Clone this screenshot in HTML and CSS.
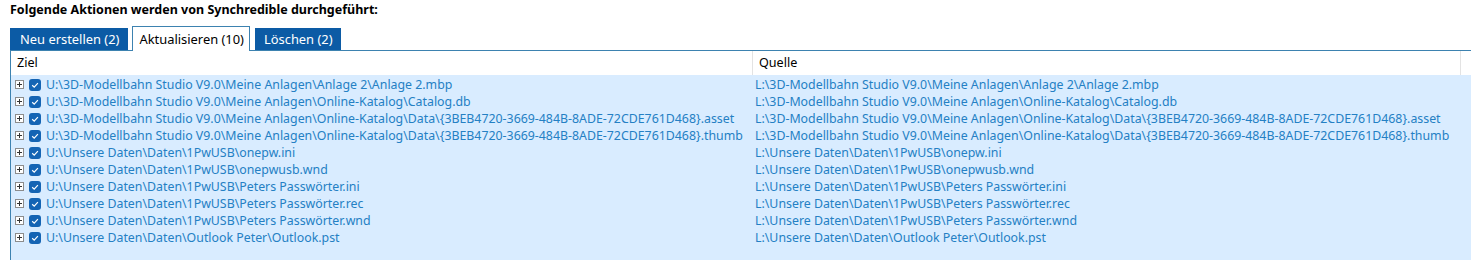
FILE: index.html
```html
<!DOCTYPE html>
<html lang="de">
<head>
  <meta charset="UTF-8">
  <title>Synchredible - Vorschau</title>
  <link rel="stylesheet" href="styles.css">
</head>
<body>
  <h1 class="title">Folgende Aktionen werden von Synchredible durchgeführt:</h1>

  <div class="tabs">
    <div class="tab">Neu erstellen (2)</div>
    <div class="tab active">Aktualisieren (10)</div>
    <div class="tab">Löschen (2)</div>
  </div>

  <div class="panel">
    <div class="head">
      <div class="col col-ziel">Ziel</div>
      <div class="col col-quelle">Quelle</div>
      <div class="col col-rest"></div>
    </div>
    <div class="list" id="list"></div>
  </div>

  <script>
    const pfade = [
      '3D-Modellbahn Studio V9.0\\Meine Anlagen\\Anlage 2\\Anlage 2.mbp',
      '3D-Modellbahn Studio V9.0\\Meine Anlagen\\Online-Katalog\\Catalog.db',
      '3D-Modellbahn Studio V9.0\\Meine Anlagen\\Online-Katalog\\Data\\{3BEB4720-3669-484B-8ADE-72CDE761D468}.asset',
      '3D-Modellbahn Studio V9.0\\Meine Anlagen\\Online-Katalog\\Data\\{3BEB4720-3669-484B-8ADE-72CDE761D468}.thumb',
      'Unsere Daten\\Daten\\1PwUSB\\onepw.ini',
      'Unsere Daten\\Daten\\1PwUSB\\onepwusb.wnd',
      'Unsere Daten\\Daten\\1PwUSB\\Peters Passwörter.ini',
      'Unsere Daten\\Daten\\1PwUSB\\Peters Passwörter.rec',
      'Unsere Daten\\Daten\\1PwUSB\\Peters Passwörter.wnd',
      'Unsere Daten\\Daten\\Outlook Peter\\Outlook.pst'
    ];

    const list = document.getElementById('list');
    for (const p of pfade) {
      const row = document.createElement('div');
      row.className = 'row';
      row.innerHTML = `
        <div class="col col-ziel">
          <span class="expander"></span>
          <span class="check"><svg viewBox="0 0 12 12" width="12" height="12"><path d="M3.2 6.2 L5.2 8.1 L8.9 4.2" fill="none" stroke="#fff" stroke-width="1.2"/></svg></span>
          <span class="path">U:\\${p}</span>
        </div>
        <div class="col col-quelle"><span class="path">L:\\${p}</span></div>
      `;
      list.appendChild(row);
    }
  </script>
</body>
</html>
```

FILE: styles.css
```css
:root {
  --tab: #0c5ba5;
  --line: #3d82b0;
  --row: #d9ecff;
  --text: #2480c4;
}

body {
  margin: 0;
  padding: 0 0 0 10px;
  font-family: "Noto Sans", sans-serif;
  font-size: 12.35px;
  background: #fff;
  overflow: hidden;
}

.title {
  margin: 0;
  height: 27px;
  line-height: 19px;
  font-size: 12.5px;
  font-weight: bold;
  color: #000;
}

.tabs {
  display: flex;
  align-items: flex-end;
  height: 23px;
  border-bottom: 1px solid var(--line);
  font-size: 12.9px;
}

.tab {
  background: var(--tab);
  color: #fff;
  height: 22px;
  line-height: 22px;
  padding: 0 9px 0 10px;
  white-space: nowrap;
}

.tab + .tab {
  margin-left: 4px;
}

.tab.active {
  background: #fff;
  color: #000;
  height: 24px;
  line-height: 24px;
  padding: 0 5px 0 6px;
  border: 1px solid var(--line);
  border-bottom: none;
  margin-bottom: -1px;
}

.tab.active + .tab {
  margin-left: 5px;
  padding: 0 8px 0 9px;
}

.panel {
  border-left: 1px solid var(--line);
  height: 210px;
  background: var(--row);
}

.head {
  display: flex;
  height: 24px;
  background: #fff;
  line-height: 24px;
  font-size: 12.6px;
}

.head .col {
  border-right: 1px solid #e3e3e3;
  padding-left: 6px;
  box-sizing: border-box;
}

.col-ziel {
  width: 742px;
  flex-shrink: 0;
}

.col-quelle {
  width: 708px;
  flex-shrink: 0;
}

.head .col-rest {
  border-right: none;
}

.list {
  padding-top: 1px;
}

.row {
  display: flex;
  height: 17px;
  line-height: 17px;
  color: var(--text);
}

.row .col-ziel {
  display: flex;
  align-items: center;
  padding-left: 4px;
  box-sizing: border-box;
}

.row .col-quelle {
  padding-left: 2px;
  box-sizing: border-box;
}

.path {
  white-space: nowrap;
}

.expander {
  width: 7px;
  height: 7px;
  border: 1px solid #8c8c8c;
  background: #fff;
  position: relative;
  margin-right: 5px;
}

.expander::before,
.expander::after {
  content: "";
  position: absolute;
  background: #333;
}

.expander::before {
  left: 1px;
  top: 3px;
  width: 5px;
  height: 1px;
}

.expander::after {
  left: 3px;
  top: 1px;
  width: 1px;
  height: 5px;
}

.check {
  width: 12px;
  height: 12px;
  border-radius: 3px;
  background: #1464b4;
  display: flex;
  margin-right: 5px;
}
```
